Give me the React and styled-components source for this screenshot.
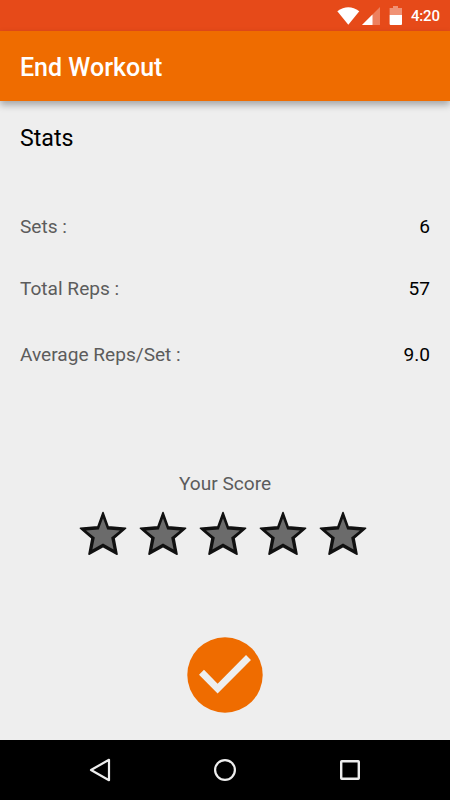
import styled, { createGlobalStyle } from 'styled-components';

const GlobalStyle = createGlobalStyle`
    * {
        box-sizing: border-box;
    }

    body {
        margin: 0;
        font-family: Roboto, sans-serif;
        background: #eee;
    }

    svg {
        display: block;
    }
`;

const Screen = styled.div`
    display: flex;
    flex-direction: column;
    width: 450px;
    height: 800px;
    overflow: hidden;
    background: #eee;
`;

const StatusBar = styled.div`
    display: flex;
    flex: none;
    align-items: center;
    justify-content: flex-end;
    height: 31px;
    padding-right: 10px;
    background: #e64a19;
`;

const Clock = styled.span`
    width: 29px;
    margin-left: 9px;
    font-size: 15px;
    font-weight: 500;
    line-height: 31px;
    letter-spacing: -0.2px;
    white-space: nowrap;
    color: #fff;
    padding-top: 1px;
`;

const AppBar = styled.header`
    flex: none;
    height: 70px;
    padding: 2px 20px 0;
    background: #ef6c00;
    box-shadow: 0 4px 7px rgba(0, 0, 0, 0.3);
`;

const Title = styled.h1`
    margin: 0;
    font-size: 25px;
    font-weight: 500;
    line-height: 70px;
    color: #fff;
`;

const Content = styled.main`
    display: flex;
    flex: 1;
    flex-direction: column;
    padding: 22px 20px 0;
`;

const Heading = styled.h2`
    margin: 0 0 61px;
    font-size: 23.2px;
    font-weight: 400;
    line-height: 30px;
    color: #000;
`;

const StatRow = styled.div`
    display: flex;
    justify-content: space-between;
    margin-bottom: ${({ $gap }) => $gap}px;
    font-size: 19.1px;
    line-height: 26px;
`;

const Label = styled.span`
    color: #5c5c5c;
`;

const Value = styled.span`
    color: #000;
`;

const ScoreLabel = styled.p`
    margin: 0;
    font-size: 19.1px;
    line-height: 26px;
    text-align: center;
    color: #5c5c5c;
`;

const Stars = styled.div`
    display: flex;
    margin: 8px 0 0 53px;
`;

const DoneButton = styled.button`
    align-self: center;
    margin: 72px 0 0;
    padding: 0;
    border: 0;
    background: none;
`;

const NavBar = styled.nav`
    display: flex;
    flex: none;
    align-items: center;
    justify-content: space-between;
    height: 60px;
    padding: 0 85px;
    background: #000;
`;

const stats = [
    { label: 'Sets :', value: '6', gap: 36 },
    { label: 'Total Reps :', value: '57', gap: 40 },
    { label: 'Average Reps/Set :', value: '9.0', gap: 103 },
];

function StatusIcons() {
    return (
        <svg width="70" height="31" viewBox="332 0 70 31" fill="#fff">
            {/* wifi */}
            <path d="M337.3 11.2Q348.3 3.2 359.3 11.2L348.3 24.8Z" />
            {/* señal */}
            <path d="M380 7V25H362Z" fillOpacity="0.3" />
            <path d="M372.5 14.5V25H362Z" />
            {/* batería */}
            <path d="M393 6H398V8H402V15H389.6V8H393Z" fillOpacity="0.4" />
            <path d="M389.6 15H402V24A1 1 0 0 1 401 25H390.6A1 1 0 0 1 389.6 24Z" />
        </svg>
    );
}

function Star() {
    return (
        <svg width="60" height="60" viewBox="0 0 60 60" strokeLinejoin="round">
            <path
                d="M30 7.6L35.2 21.9L52.6 23.2L41 33.2L44 49.2L30 41.6L16 49.2L19 33.2L7.4 23.2L24.8 21.9Z"
                fill="#111"
                stroke="#111"
                strokeWidth="1.6"
            />
            <path
                d="M30 13.2L34.2 24.6L47 25.4L38.2 32.4L40.6 44.6L30 38.5L19.4 44.6L21.8 32.4L13 25.4L25.8 24.6Z"
                fill="#6b6b6b"
            />
        </svg>
    );
}

export default function App() {
    return (
        <Screen>
            <GlobalStyle />
            <StatusBar>
                <StatusIcons />
                <Clock>4:20</Clock>
            </StatusBar>
            <AppBar>
                <Title>End Workout</Title>
            </AppBar>

            <Content>
                <Heading>Stats</Heading>
                {stats.map(({ label, value, gap }) => (
                    <StatRow key={label} $gap={gap}>
                        <Label>{label}</Label>
                        <Value>{value}</Value>
                    </StatRow>
                ))}

                <ScoreLabel>Your Score</ScoreLabel>
                <Stars>
                    {[1, 2, 3, 4, 5].map((n) => (
                        <Star key={n} />
                    ))}
                </Stars>

                <DoneButton aria-label="Done">
                    <svg width="76" height="76" viewBox="187 637 76 76">
                        <circle cx="225" cy="675" r="37.7" fill="#ef6c00" />
                        <path
                            d="M201.5 672.3L217.6 688.6L248.5 657.5"
                            fill="none"
                            stroke="#eee"
                            strokeWidth="7"
                        />
                    </svg>
                </DoneButton>
            </Content>

            <NavBar>
                <svg width="30" height="30" viewBox="85 755 30 30" fill="none" stroke="#eee" strokeWidth="2.2">
                    <path d="M109 759.8V780.2L91 770Z" strokeLinejoin="round" />
                </svg>
                <svg width="30" height="30" viewBox="210 755 30 30" fill="none" stroke="#eee" strokeWidth="2.2">
                    <circle cx="225" cy="770" r="9.9" />
                </svg>
                <svg width="30" height="30" viewBox="335 755 30 30" fill="none" stroke="#eee" strokeWidth="2.4">
                    <rect x="341.2" y="761.2" width="17.6" height="17.6" rx="0.5" />
                </svg>
            </NavBar>
        </Screen>
    );
}
